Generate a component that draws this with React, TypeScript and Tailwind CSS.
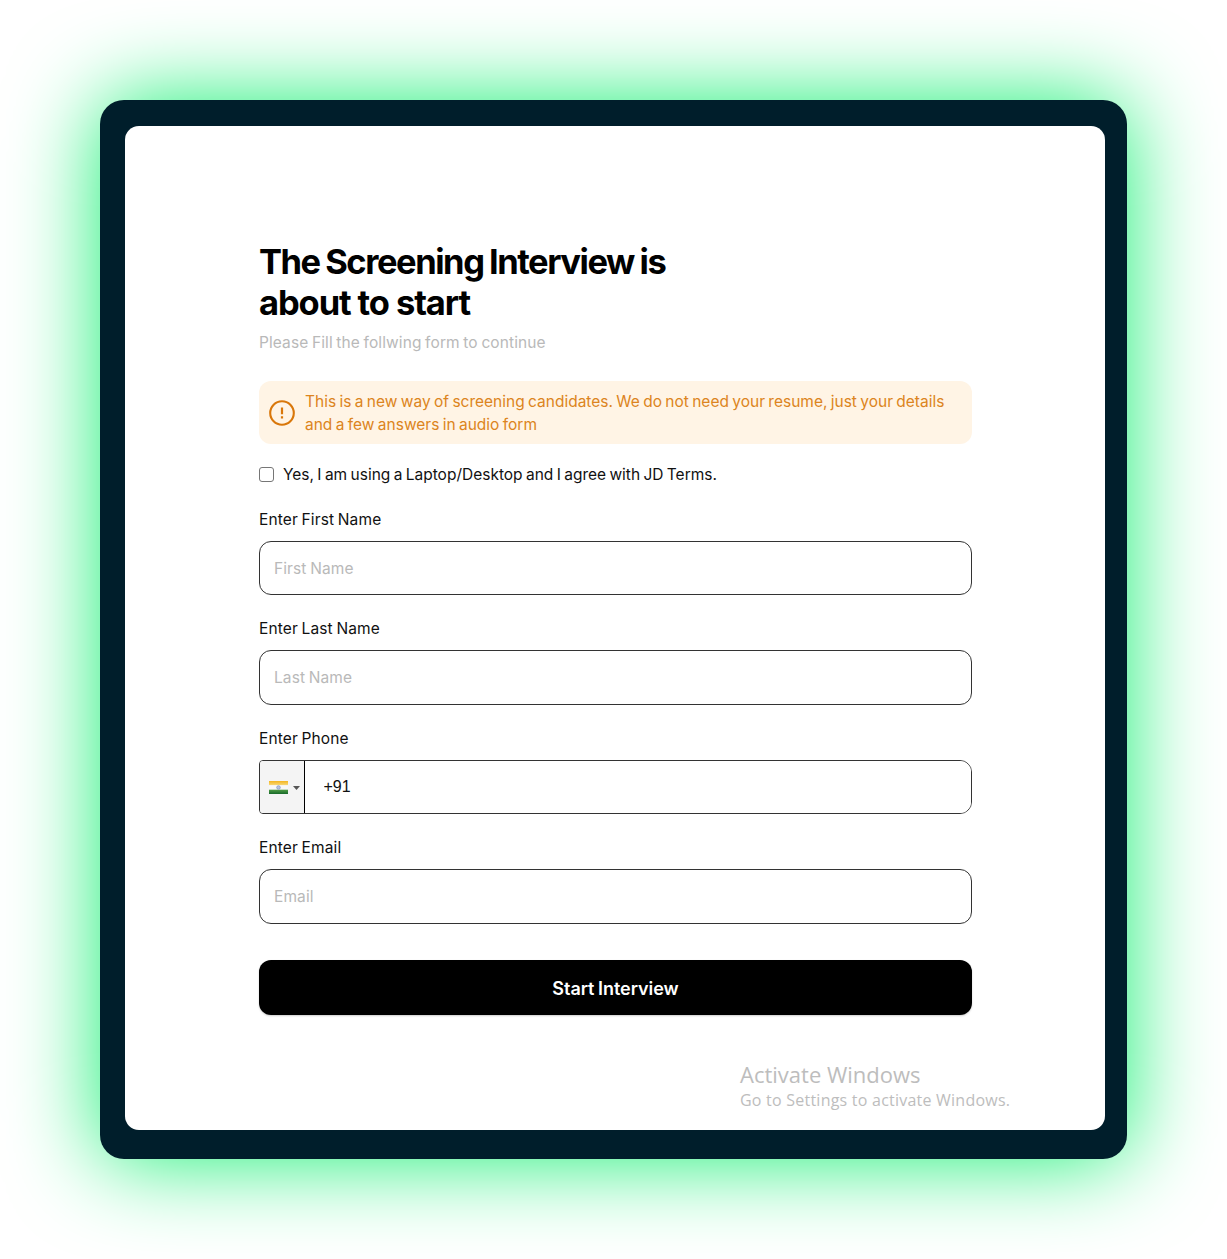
import React from "react";

function Field({ label, placeholder }: { label: string; placeholder: string }) {
  return (
    <label className="mb-[21px] block">
      <span className="block h-6 text-[15.5px] leading-[26px] tracking-[0.12px] [word-spacing:-0.8px]">{label}</span>
      <input
        placeholder={placeholder}
        className="mt-[10px] block h-[54.5px] w-full rounded-[12px] border border-[#333] bg-white px-[14px] pt-px text-[15.5px] tracking-[0.1px] [word-spacing:-0.8px] placeholder:text-[#b9b9b9]"
      />
    </label>
  );
}

function IndiaFlag() {
  return (
    <svg width="19" height="13" viewBox="0 0 19 13">
      <defs>
        <linearGradient id="saffron" x1="0" y1="0" x2="0" y2="1">
          <stop offset="0" stopColor="#f4b51f" />
          <stop offset="1" stopColor="#f8d97a" />
        </linearGradient>
        <linearGradient id="green" x1="0" y1="0" x2="0" y2="1">
          <stop offset="0" stopColor="#4f9c45" />
          <stop offset="1" stopColor="#17692a" />
        </linearGradient>
      </defs>
      <rect width="19" height="4.3" fill="url(#saffron)" />
      <rect y="4.3" width="19" height="4.4" fill="#f8f8f8" />
      <rect y="8.7" width="19" height="4.3" fill="url(#green)" />
      <circle cx="9.5" cy="6.5" r="1.8" fill="#b5c3df" stroke="#7f93be" strokeWidth="0.7" />
    </svg>
  );
}

export default function App() {
  return (
    <main className="h-[1259px] w-[1227px] overflow-hidden bg-white p-[100px] font-['Inter',sans-serif] text-[#111]">
      <div className="h-[1059px] rounded-[24px] bg-[#001e2b] pt-[26px] pl-[24.5px] shadow-[0_0_90px_#11ef70]">
        <section className="h-[1004px] w-[980.5px] rounded-[14px] bg-white pt-[114.5px] pl-[134.5px]">
          <form className="w-[713px]" onSubmit={(e) => e.preventDefault()}>
            <h1 className="text-[34.5px] leading-[41px] font-bold whitespace-nowrap text-black">
              <span className="tracking-[-1.45px] [word-spacing:-1.2px]">The Screening Interview is</span>
              <br />
              <span className="tracking-[-1.1px]">about to start</span>
            </h1>
            <p className="mt-[7.5px] h-6 text-[15.5px] leading-[25px] tracking-[0.09px] [word-spacing:-0.8px] text-[#b9b9b9]">
              Please Fill the follwing form to continue
            </p>

            <div className="mt-[26.5px] flex h-[63.5px] items-center rounded-[12px] bg-[#fff4e5] pt-px pl-[10px] text-[#dc8420]">
              <svg width="26" height="26" viewBox="0 0 26 26" fill="none" stroke="#d9770a" strokeWidth="2.1">
                <circle cx="13" cy="13" r="11.8" />
                <path d="M13 7.5v6.8M13 16.3v2.3" strokeWidth="2.2" />
              </svg>
              <p className="ml-[10px] text-[15.5px] leading-[23px] [word-spacing:-1px] whitespace-nowrap">
                This is a new way of screening candidates. We do not need your resume, just your details
                <br />
                and a few answers in audio form
              </p>
            </div>

            <label className="mt-[18.5px] mb-[20px] flex h-6 items-center">
              <input
                type="checkbox"
                className="size-[15px] appearance-none rounded-[3px] border border-[#767676] bg-white"
              />
              <span className="ml-[9px] text-[15.5px] leading-6 [word-spacing:-1px]">
                Yes, I am using a Laptop/Desktop and I agree with JD Terms.
              </span>
            </label>

            <Field label="Enter First Name" placeholder="First Name" />
            <Field label="Enter Last Name" placeholder="Last Name" />

            <div className="mb-[21px]">
              <span className="block h-6 text-[15.5px] leading-[26px] tracking-[0.12px] [word-spacing:-0.8px]">
                Enter Phone
              </span>
              <div className="mt-[10px] flex h-[54.5px] overflow-hidden rounded-l-[4px] rounded-r-[12px] border border-[#333]">
                <button
                  type="button"
                  className="flex w-[45px] items-center border-r border-black bg-[#f4f4f4] pt-[2px] pl-[9px]"
                >
                  <IndiaFlag />
                  <svg className="ml-[5px]" width="7" height="4" viewBox="0 0 7 4">
                    <path d="M0 0h7L3.5 4z" fill="#555" />
                  </svg>
                </button>
                <input
                  defaultValue="+91"
                  className="w-0 flex-1 bg-white pl-[18.5px] font-['Liberation_Sans',sans-serif] text-[16px]"
                />
              </div>
            </div>

            <Field label="Enter Email" placeholder="Email" />

            <button
              type="submit"
              className="mt-[36.5px] block h-[54.5px] w-full rounded-[12px] bg-black pt-[2px] text-[18px] font-semibold tracking-[-0.05px] [word-spacing:-0.8px] text-white shadow-[0_1px_2px_rgba(0,0,0,0.2)]"
            >
              Start Interview
            </button>
          </form>

          <div className="mt-[44px] ml-[481px] font-['Open_Sans',sans-serif] whitespace-nowrap text-[#bdbdbd]">
            <p className="text-[22px] leading-[30px]">Activate Windows</p>
            <p className="text-[16px] leading-[22px] tracking-[0.23px]">Go to Settings to activate Windows.</p>
          </div>
        </section>
      </div>
    </main>
  );
}
